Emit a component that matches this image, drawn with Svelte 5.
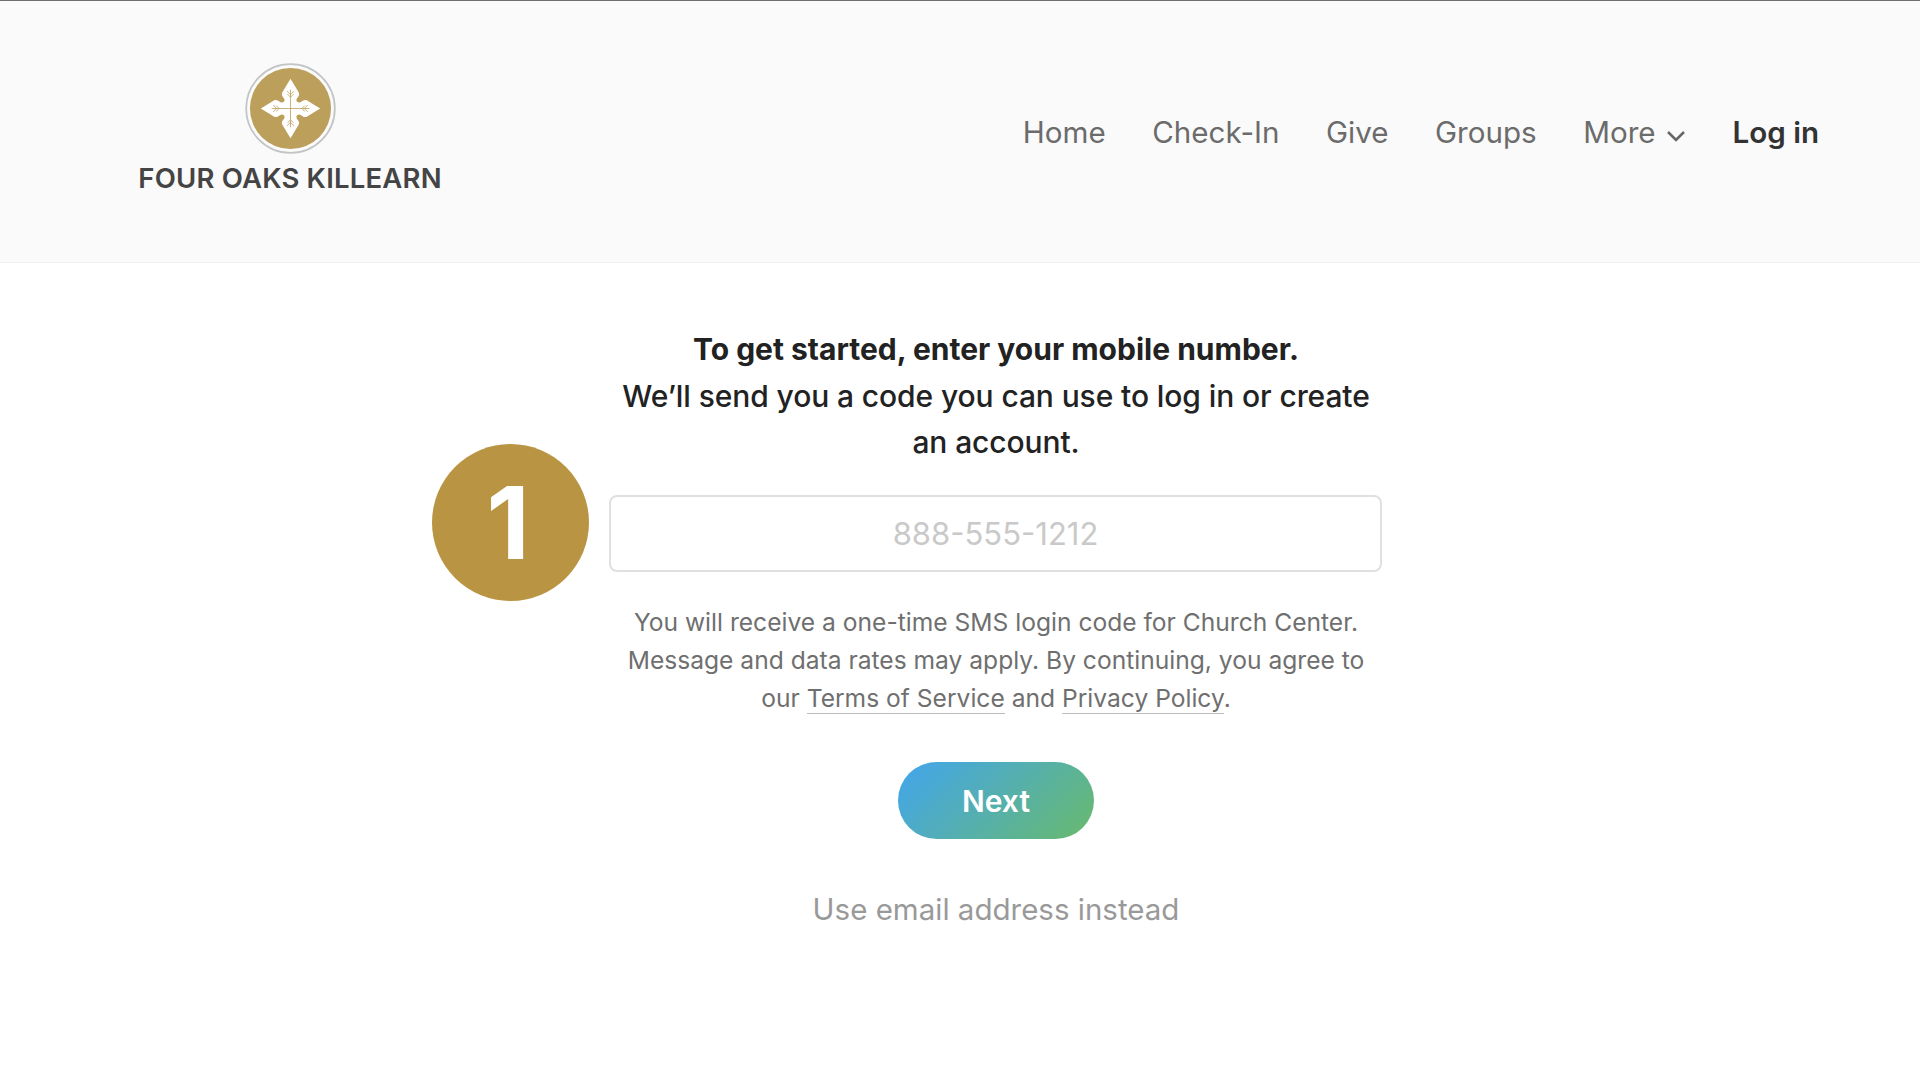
<script>
  const links = ['Home', 'Check-In', 'Give', 'Groups'];
</script>

<div class="page">
  <header class="header">
    <div class="logo">
      <svg class="mark" viewBox="0 0 92 92" width="91" height="91" aria-hidden="true">
        <circle cx="46" cy="46" r="44.800" fill="#fbfbfb" stroke="#c3c4c5" stroke-width="1.800"/>
        <circle cx="46" cy="46" r="41" fill="#bd9f5c"/>
        <path fill="#fff" d="M46 16 L54.500 30 C55.500 33.500 52.500 35 52 37 C51.700 39 53 40 55 40 C57 40 58.500 36.500 62 37.500 L76 46 L62 54.500 C58.500 55.500 57 52 55 52 C53 52 51.700 53 52 55 C52.500 57 55.500 58.500 54.500 62 L46 76 L37.500 62 C36.500 58.500 39.500 57 40 55 C40.300 53 39 52 37 52 C35 52 33.500 55.500 30 54.500 L16 46 L30 37.500 C33.500 36.500 35 40 37 40 C39 40 40.300 39 40 37 C39.500 35 36.500 33.500 37.500 30 Z"/>
        <path fill="none" stroke="#bd9f5c" stroke-width="0.800" d="M46 27 V65 M27 46 H65 M43 31.500 L46 34.500 L49 31.500 M42.500 28.500 L46 32 L49.500 28.500 M43 60.500 L46 57.500 L49 60.500 M42.500 63.500 L46 60 L49.500 63.500 M31.500 43 L34.500 46 L31.500 49 M28.500 42.500 L32 46 L28.500 49.500 M60.500 43 L57.500 46 L60.500 49 M63.500 42.500 L60 46 L63.500 49.500"/>
      </svg>
      <div class="brand">FOUR OAKS KILLEARN</div>
    </div>
    <nav class="nav">
      {#each links as link}
        <a class="link" href="#top">{link}</a>
      {/each}
      <a class="link more" href="#top">More
        <svg viewBox="0 0 20 14" width="20" height="14" aria-hidden="true">
          <path d="M2 3 L10 11 L18 3" fill="none" stroke="#666" stroke-width="2.500"/>
        </svg>
      </a>
      <a class="link login" href="#top">Log in</a>
    </nav>
  </header>

  <main class="main">
    <div class="step">1</div>
    <h1 class="title"><strong>To get started, enter your mobile number.</strong><br />We’ll send you a code you can use to log in or create an account.</h1>
    <input class="phone" placeholder="888-555-1212" />
    <p class="legal">You will receive a one-time SMS login code for Church Center. Message and data rates may apply. By continuing, you agree to our <a href="#top">Terms of Service</a> and <a href="#top">Privacy Policy</a>.</p>
    <button class="next">Next</button>
    <a class="alt" href="#top">Use email address instead</a>
  </main>
</div>

<style>
  :global(body) {
    margin: 0;
    background: #fff;
    font-family: Inter, "Liberation Sans", sans-serif;
  }
  .page {
    height: 1080px;
    overflow: hidden;
    background: #fff;
  }
  .header {
    box-sizing: border-box;
    height: 263px;
    display: flex;
    justify-content: space-between;
    background: #fafafa;
    border-top: 1px solid #6f6f6f;
    border-bottom: 1px solid #f0f0f0;
    padding: 62px 101px 0 139px;
  }
  .logo {
    width: 302px;
    display: flex;
    flex-direction: column;
    align-items: center;
  }
  .mark {
    display: block;
  }
  .brand {
    margin-top: 8px;
    font-family: Inter, sans-serif;
    font-size: 27.500px;
    letter-spacing: 0.200px;
    line-height: 32px;
    font-weight: 600;
    color: #444;
    white-space: nowrap;
  }
  .nav {
    display: flex;
    align-items: baseline;
    gap: 46.500px;
    padding-top: 49px;
  }
  .link {
    font-size: 29.600px;
    line-height: 40px;
    color: #6b6b6b;
    text-decoration: none;
  }
  .more svg {
    margin-left: 2px;
  }
  .login {
    color: #333;
    font-weight: 600;
  }
  .main {
    position: relative;
    box-sizing: border-box;
    width: 772px;
    margin-left: 610px;
    padding-top: 63px;
    display: flex;
    flex-direction: column;
    align-items: center;
    text-align: center;
  }
  .step {
    position: absolute;
    left: -178px;
    top: 181px;
    box-sizing: border-box;
    width: 157px;
    height: 157px;
    padding-right: 5px;
    border-radius: 50%;
    background: #b99442;
    color: #fff;
    font-size: 100px;
    font-weight: 700;
    line-height: 157px;
  }
  .title {
    margin: 0;
    width: 772px;
    font-size: 30px;
    letter-spacing: -0.100px;
    line-height: 46.500px;
    font-weight: 500;
    color: #222;
  }
  .title strong {
    font-weight: 700;
    letter-spacing: 0;
  }
  .phone {
    box-sizing: border-box;
    width: 773px;
    height: 77px;
    margin: 29px 0 0 -1px;
    border: 2px solid #e0e0e0;
    border-radius: 8px;
    background: #fff;
    font: 400 31px Inter, sans-serif;
    text-align: center;
    outline: none;
  }
  .phone::placeholder {
    color: #c9c9c9;
    opacity: 1;
  }
  .legal {
    margin: 31px 0 0;
    width: 772px;
    font-size: 24.600px;
    line-height: 38px;
    color: #6f6f6f;
  }
  .legal a {
    color: #6f6f6f;
    text-decoration: none;
    border-bottom: 1px solid #bbb;
  }
  .next {
    width: 196px;
    height: 77px;
    margin-top: 45px;
    padding: 2px 0 0;
    border: none;
    border-radius: 39px;
    background: linear-gradient(135deg, #42a5ee, #68ba6c);
    color: #fff;
    font: 600 30px Inter, sans-serif;
  }
  .alt {
    margin-top: 47px;
    font-size: 29.500px;
    line-height: 46px;
    color: #999;
    text-decoration: none;
  }
</style>
